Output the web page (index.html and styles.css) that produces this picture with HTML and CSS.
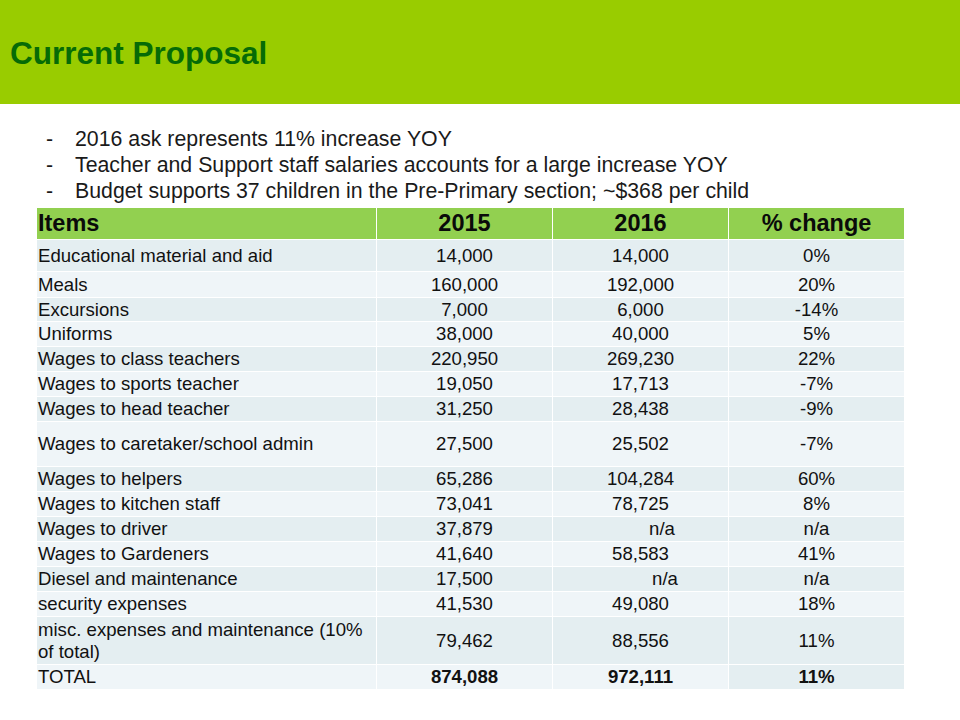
FILE: index.html
```html
<!DOCTYPE html>
<html lang="en">
<head>
<meta charset="utf-8">
<title>Current Proposal</title>
<link rel="stylesheet" href="styles.css">
</head>
<body>
<header class="banner">
  <h1 class="title">Current Proposal</h1>
</header>
<ul class="points">
  <li><span class="dash">-</span><span>2016 ask represents 11% increase YOY</span></li>
  <li><span class="dash">-</span><span>Teacher and Support staff salaries accounts for a large increase YOY</span></li>
  <li><span class="dash">-</span><span>Budget supports 37 children in the Pre-Primary section; ~$368 per child</span></li>
</ul>
<table class="budget">
  <colgroup>
    <col class="c-item"><col class="c-num"><col class="c-num"><col class="c-num">
  </colgroup>
  <thead>
    <tr class="h32">
      <th class="left">Items</th><th>2015</th><th>2016</th><th>% change</th>
    </tr>
  </thead>
  <tbody>
    <tr class="dark h32"><td class="left">Educational material and aid</td><td>14,000</td><td>14,000</td><td>0%</td></tr>
    <tr class="light h26"><td class="left">Meals</td><td>160,000</td><td>192,000</td><td>20%</td></tr>
    <tr class="dark h24"><td class="left">Excursions</td><td>7,000</td><td>6,000</td><td>-14%</td></tr>
    <tr class="light h25"><td class="left">Uniforms</td><td>38,000</td><td>40,000</td><td>5%</td></tr>
    <tr class="dark h25"><td class="left">Wages to class teachers</td><td>220,950</td><td>269,230</td><td>22%</td></tr>
    <tr class="light h25"><td class="left">Wages to sports teacher</td><td>19,050</td><td>17,713</td><td>-7%</td></tr>
    <tr class="dark h25"><td class="left">Wages to head teacher</td><td>31,250</td><td>28,438</td><td>-9%</td></tr>
    <tr class="light h45"><td class="left">Wages to caretaker/school admin</td><td>27,500</td><td>25,502</td><td>-7%</td></tr>
    <tr class="dark h25"><td class="left">Wages to helpers</td><td>65,286</td><td>104,284</td><td>60%</td></tr>
    <tr class="light h25"><td class="left">Wages to kitchen staff</td><td>73,041</td><td>78,725</td><td>8%</td></tr>
    <tr class="dark h25"><td class="left">Wages to driver</td><td>37,879</td><td class="na1">n/a</td><td>n/a</td></tr>
    <tr class="light h25"><td class="left">Wages to Gardeners</td><td>41,640</td><td>58,583</td><td>41%</td></tr>
    <tr class="dark h25"><td class="left">Diesel and maintenance</td><td>17,500</td><td class="na2">n/a</td><td>n/a</td></tr>
    <tr class="light h25"><td class="left">security expenses</td><td>41,530</td><td>49,080</td><td>18%</td></tr>
    <tr class="dark h48"><td class="left">misc. expenses and maintenance (10%<br>of total)</td><td>79,462</td><td>88,556</td><td>11%</td></tr>
    <tr class="light h25 total"><td class="left plain">TOTAL</td><td>874,088</td><td>972,111</td><td class="dark-cell">11%</td></tr>
  </tbody>
</table>
</body>
</html>
```

FILE: styles.css
```css
html, body {
  margin: 0;
  padding: 0;
  background: #ffffff;
}

body {
  width: 960px;
  height: 720px;
  overflow: hidden;
  font-family: "Liberation Sans", Arial, sans-serif;
  color: #111111;
}

.banner {
  height: 104px;
  background: #99cc00;
  box-sizing: border-box;
  padding: 35px 0 0 10px;
}

.title {
  margin: 0;
  font-size: 31.5px;
  line-height: 36px;
  font-weight: bold;
  color: #066b06;
}

.points {
  list-style: none;
  margin: 22px 0 0 0;
  padding: 0 0 0 46px;
  font-size: 21.3px;
  line-height: 26px;
  color: #1a1a1a;
}

.points li {
  display: flex;
}

.dash {
  width: 29px;
  flex: none;
}

.budget {
  margin: 4px 0 0 37px;
  width: 868px;
  table-layout: fixed;
  border-collapse: separate;
  border-spacing: 0;
  font-size: 18.6px;
  line-height: 21.5px;
}

.c-item { width: 340px; }
.c-num { width: 176px; }

.budget th,
.budget td {
  padding: 0 1px;
  border-right: 1px solid #ffffff;
  border-bottom: 1px solid #ffffff;
  text-align: center;
  vertical-align: middle;
  white-space: nowrap;
}

.budget th {
  background: #92d050;
  font-size: 23.5px;
  font-weight: bold;
  color: #0a0a0a;
}

.budget .left {
  text-align: left;
  padding-left: 1px;
}

.dark td { background: #e4eef1; }
.light td { background: #eff5f8; }
.light td.dark-cell { background: #e4eef1; }

.total td { font-weight: bold; }
.total td.plain { font-weight: normal; }

.na1 { padding-left: 44px !important; }
.na2 { padding-left: 50px !important; }

.h24 td { height: 23px; }
.h25 td { height: 24px; }
.h26 td { height: 25px; }
.h32 th, .h32 td { height: 31px; }
.h45 td { height: 44px; }
.h48 td { height: 47px; }
```
